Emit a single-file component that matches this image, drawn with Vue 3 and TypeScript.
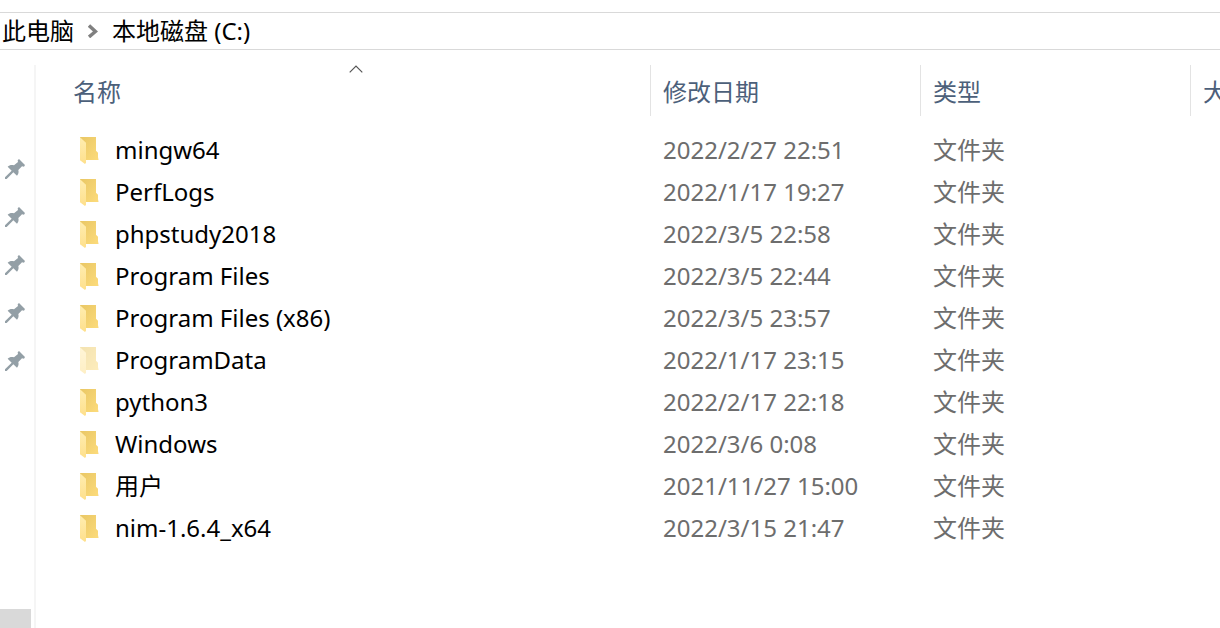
<script setup lang="ts">
interface Entry {
  name: string
  modified: string
  hidden?: boolean
}

const kind = '文件夹'
const entries: Entry[] = [
  { name: 'mingw64', modified: '2022/2/27 22:51' },
  { name: 'PerfLogs', modified: '2022/1/17 19:27' },
  { name: 'phpstudy2018', modified: '2022/3/5 22:58' },
  { name: 'Program Files', modified: '2022/3/5 22:44' },
  { name: 'Program Files (x86)', modified: '2022/3/5 23:57' },
  { name: 'ProgramData', modified: '2022/1/17 23:15', hidden: true },
  { name: 'python3', modified: '2022/2/17 22:18' },
  { name: 'Windows', modified: '2022/3/6 0:08' },
  { name: '用户', modified: '2021/11/27 15:00' },
  { name: 'nim-1.6.4_x64', modified: '2022/3/15 21:47' },
]
const pinCount = 5
</script>

<template>
  <div class="explorer">
    <nav class="address">
      <a href="#">此电脑</a>
      <svg class="chevron" viewBox="0 0 10 14" aria-hidden="true">
        <path d="M1 1.5 7.5 7.5 1 13" fill="none" stroke="#808080" stroke-width="3.4" />
      </svg>
      <a href="#">本地磁盘 (C:)</a>
    </nav>

    <div class="body">
      <aside class="side">
        <ul class="pins">
          <li v-for="n in pinCount" :key="n">
            <svg viewBox="0 0 60 60" aria-hidden="true">
              <path
                d="M42 0 60 18 57 23 51 22 40 33C42 40 40 46 36 50L25 40 5 60H0V55L20 35 8 23C13 18 20 17 27 19L39 9 38 4Z"
                fill="#939fa6"
              />
            </svg>
          </li>
        </ul>
        <div class="thumb"></div>
      </aside>

      <main class="files">
        <table>
          <colgroup>
            <col class="c-name" />
            <col class="c-mid" />
            <col class="c-mid" />
            <col class="c-size" />
          </colgroup>
          <thead>
            <tr>
              <th scope="col" aria-sort="ascending">
                <button type="button" class="head">
                  名称
                  <svg class="sort" viewBox="0 0 14 8" aria-hidden="true">
                    <path d="M.7 7.3 7 1l6.3 6.3" fill="none" stroke="#555" stroke-width="1.2" />
                  </svg>
                </button>
              </th>
              <th scope="col"><button type="button" class="head">修改日期</button></th>
              <th scope="col"><button type="button" class="head">类型</button></th>
              <th scope="col"><button type="button" class="head last">大小</button></th>
            </tr>
          </thead>
          <tbody>
            <tr v-for="entry in entries" :key="entry.name">
              <td>
                <div class="name">
                  <svg class="folder" :class="{ faded: entry.hidden }" viewBox="0 0 60 84" aria-hidden="true">
                    <path d="M3 3H51V44L57 50V72H3Z" fill="url(#folder-back)" />
                    <path d="M57 63 60 72H57Z" fill="#f9e9bd" />
                    <path d="M3 4 21 20V80L18 84 3 73Z" fill="url(#folder-front)" />
                  </svg>
                  <span>{{ entry.name }}</span>
                </div>
              </td>
              <td>{{ entry.modified }}</td>
              <td>{{ kind }}</td>
              <td></td>
            </tr>
          </tbody>
        </table>
      </main>
    </div>

    <svg class="defs" aria-hidden="true">
      <defs>
        <linearGradient id="folder-back" x1="0" y1="0" x2="1" y2="1">
          <stop offset="0" stop-color="#e9c765" />
          <stop offset="1" stop-color="#fcdb7b" />
        </linearGradient>
        <linearGradient id="folder-front" x1="0" y1="0" x2="0" y2="1">
          <stop offset="0" stop-color="#ffedb0" />
          <stop offset="1" stop-color="#fee08c" />
        </linearGradient>
      </defs>
    </svg>
  </div>
</template>

<style>
body {
  margin: 0;
  background: #fff;
}
</style>

<style scoped>
.explorer {
  display: flex;
  flex-direction: column;
  box-sizing: border-box;
  min-height: 100vh;
  padding-top: 12px;
  overflow: hidden;
  background: #fff;
  color: #000;
  font-family: "Noto Sans", "Noto Sans CJK SC", sans-serif;
  font-size: 24px;
  line-height: 36px;
}
.address {
  display: flex;
  align-items: center;
  padding-left: 2px;
  border-top: 1px solid #d9d9d9;
  border-bottom: 1px solid #d9d9d9;
}
.address a {
  color: inherit;
  text-decoration: none;
}
.chevron {
  width: 10px;
  height: 14px;
  margin: 0 14px;
}
.body {
  display: flex;
  flex: 1;
  padding-top: 15px;
}
.side {
  display: flex;
  flex-direction: column;
  justify-content: space-between;
  box-sizing: border-box;
  width: 36px;
  flex: none;
  border-right: 2px solid #f5f5f5;
}
.pins {
  margin: 0;
  padding: 80px 0 0 5px;
  list-style: none;
}
.pins li {
  display: flex;
  align-items: center;
  height: 48px;
}
.pins svg {
  width: 20px;
  height: 20px;
}
.thumb {
  width: 31px;
  height: 19px;
  background: #d9d9d9;
}
.files {
  flex: 1;
  min-width: 0;
  padding-left: 25px;
  overflow: hidden;
}
table {
  width: 100%;
  table-layout: fixed;
  border-collapse: collapse;
}
.c-name {
  width: 590px;
}
.c-mid {
  width: 270px;
}
th {
  padding: 0 0 13px;
}
.head {
  position: relative;
  display: block;
  width: 100%;
  height: 51px;
  padding: 2px 0 0 12px;
  border: 0;
  border-right: 1px solid #e3e3e3;
  background: none;
  color: #4c607a;
  font: inherit;
  font-weight: 400;
  text-align: left;
  white-space: nowrap;
}
.head.last {
  border-right: 0;
}
.sort {
  position: absolute;
  top: 0;
  left: 50%;
  width: 14px;
  height: 8px;
  margin-left: -7px;
}
td {
  height: 42px;
  padding: 0 0 0 12px;
  color: #6d6d6d;
  white-space: nowrap;
}
.name {
  display: flex;
  align-items: center;
  gap: 16px;
  padding-left: 6px;
  color: #000;
}
.folder {
  width: 20px;
  height: 28px;
}
.faded {
  opacity: 0.5;
}
.defs {
  position: absolute;
  width: 0;
  height: 0;
}
</style>
